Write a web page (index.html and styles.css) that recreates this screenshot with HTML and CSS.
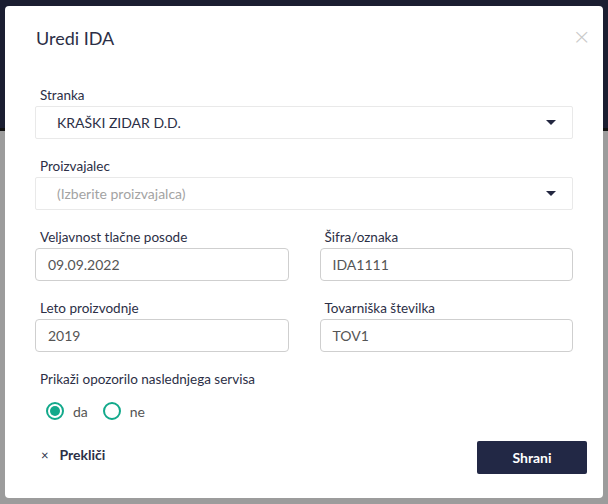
FILE: index.html
```html
<!DOCTYPE html>
<html lang="sl">
<head>
<meta charset="utf-8">
<title>Uredi IDA</title>
<link rel="stylesheet" href="styles.css">
</head>
<body>
<div class="backdrop">
  <div class="modal">
    <div class="modal-header">
      <h2 class="modal-title">Uredi IDA</h2>
      <span class="close">&times;</span>
    </div>
    <div class="modal-body">
      <div class="field">
        <label class="label">Stranka</label>
        <div class="select">
          <span class="select-value">KRAŠKI ZIDAR D.D.</span>
          <span class="caret"></span>
        </div>
      </div>
      <div class="field">
        <label class="label">Proizvajalec</label>
        <div class="select">
          <span class="select-value placeholder">(Izberite proizvajalca)</span>
          <span class="caret"></span>
        </div>
      </div>
      <div class="row">
        <div class="field">
          <label class="label">Veljavnost tlačne posode</label>
          <div class="input">09.09.2022</div>
        </div>
        <div class="field">
          <label class="label">Šifra/oznaka</label>
          <div class="input">IDA1111</div>
        </div>
      </div>
      <div class="row">
        <div class="field">
          <label class="label">Leto proizvodnje</label>
          <div class="input">2019</div>
        </div>
        <div class="field">
          <label class="label">Tovarniška številka</label>
          <div class="input">TOV1</div>
        </div>
      </div>
      <div class="field">
        <label class="label">Prikaži opozorilo naslednjega servisa</label>
        <div class="radios">
          <span class="radio checked"><span class="dot"></span></span><span class="radio-text">da</span>
          <span class="radio"></span><span class="radio-text">ne</span>
        </div>
      </div>
    </div>
    <div class="modal-footer">
      <span class="cancel"><span class="cancel-x">&times;</span>Prekliči</span>
      <span class="btn">Shrani</span>
    </div>
  </div>
</div>
</body>
</html>
```
FILE: styles.css
```css
html, body {
  margin: 0;
  padding: 0;
}
body {
  font-family: Lato, "Open Sans", sans-serif;
  color: #2c2f46;
}
.backdrop {
  height: 504px;
  overflow: hidden;
  background: linear-gradient(#1b1e31 0 128px, #111 128px 131px, #9c9c9c 131px);
  padding: 6px 5px 0 5px;
  box-sizing: border-box;
}
.modal {
  width: 598px;
  height: 492px;
  background: #fff;
  border-radius: 4px;
  box-sizing: border-box;
  display: flex;
  flex-direction: column;
}
.modal-header {
  display: flex;
  justify-content: space-between;
  align-items: center;
  padding: 20px 12px 0 31px;
  height: 24px;
  box-sizing: content-box;
}
.modal-title {
  margin: 0;
  font-size: 18px;
  font-weight: 400;
  line-height: 24px;
  color: #2c2f46;
}
.close {
  font-size: 22px;
  color: #c9c9c9;
  line-height: 20px;
  font-family: "DejaVu Sans", sans-serif;
  font-weight: 300;
  margin-top: -3px;
}
.modal-body {
  padding: 35px 30px 0 30px;
}
.modal-body > * + * {
  margin-top: 17px;
}
.field {
  display: flex;
  flex-direction: column;
}
.label {
  font-size: 13.5px;
  line-height: 20px;
  padding-left: 5px;
  margin-bottom: 1px;
  color: #2c2f46;
}
.select {
  height: 33px;
  border: 1px solid #e9e9e9;
  border-radius: 2px;
  box-sizing: border-box;
  display: flex;
  align-items: center;
  justify-content: space-between;
  padding: 0 16px 0 21px;
}
.select-value {
  font-size: 14px;
  color: #2c2f46;
}
.select-value.placeholder {
  color: #a3a3a3;
}
.caret {
  width: 0;
  height: 0;
  border-left: 5px solid transparent;
  border-right: 5px solid transparent;
  border-top: 5px solid #232740;
}
.row {
  display: grid;
  grid-template-columns: 1fr 1fr;
  column-gap: 31px;
}
.input {
  height: 33px;
  border: 1px solid #cfcfcf;
  border-radius: 4px;
  box-sizing: border-box;
  display: flex;
  align-items: center;
  padding-left: 12px;
  font-size: 14px;
  color: #555;
}
.radios {
  display: flex;
  align-items: center;
  height: 20px;
  margin-top: 11px;
  padding-left: 11px;
  font-size: 14px;
  color: #555;
}
.radio {
  width: 18px;
  height: 18px;
  border: 2px solid #12a98b;
  border-radius: 50%;
  box-sizing: border-box;
  display: flex;
  align-items: center;
  justify-content: center;
}
.dot {
  width: 10px;
  height: 10px;
  border-radius: 50%;
  background: #12a98b;
}
.radio-text {
  margin-left: 9px;
  margin-right: 15px;
}
.modal-footer {
  margin-top: auto;
  display: flex;
  justify-content: space-between;
  align-items: center;
  padding: 0 16px 24px 36px;
}
.cancel {
  font-size: 14px;
  font-weight: 700;
  color: #2c2f46;
  display: flex;
  align-items: center;
  margin-top: -6px;
}
.cancel-x {
  font-weight: 400;
  font-size: 13px;
  margin-right: 11px;
}
.btn {
  width: 110px;
  height: 33px;
  background: #222845;
  color: #fff;
  font-size: 14px;
  font-weight: 700;
  display: flex;
  align-items: center;
  justify-content: center;
  border-radius: 2px;
}
```
